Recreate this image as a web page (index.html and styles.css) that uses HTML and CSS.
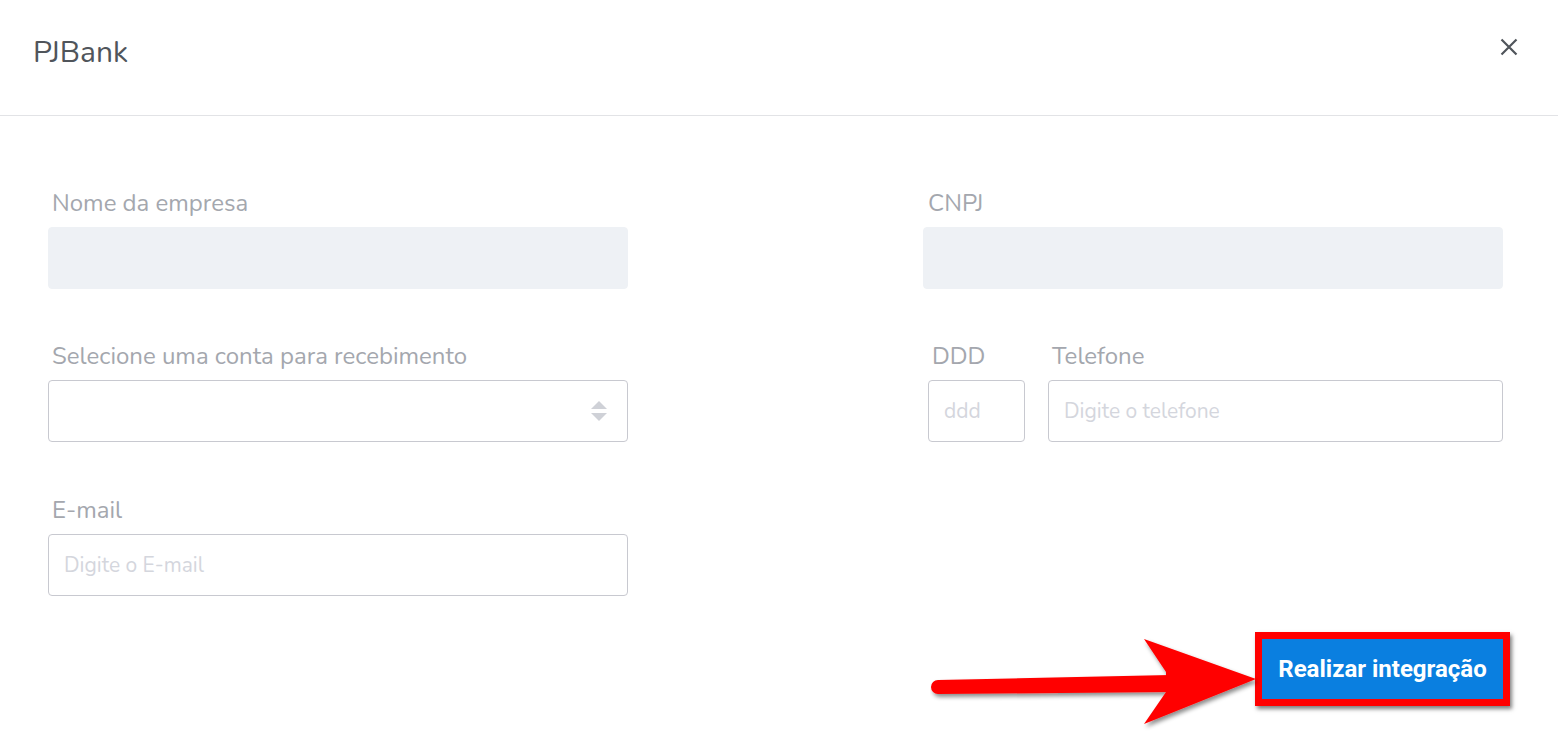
FILE: index.html
```html
<!DOCTYPE html>
<html lang="pt-BR">
<head>
<meta charset="utf-8">
<title>PJBank</title>
<link rel="stylesheet" href="styles.css">
</head>
<body>
<div class="modal">
  <header class="modal-header">
    <h1 class="modal-title">PJBank</h1>
    <button class="close" aria-label="Fechar">
      <svg width="18" height="18" viewBox="0 0 18 18"><path d="M1.5 1.5 L16.5 16.5 M16.5 1.5 L1.5 16.5" stroke="#50555b" stroke-width="2.2" fill="none"/></svg>
    </button>
  </header>
  <main class="modal-body">
    <div class="grid">
      <div class="field">
        <label class="label">Nome da empresa</label>
        <div class="input disabled"></div>
      </div>
      <div class="field">
        <label class="label shift">CNPJ</label>
        <div class="input disabled"></div>
      </div>
      <div class="field">
        <label class="label">Selecione uma conta para recebimento</label>
        <div class="input select">
          <svg class="sel-icon" width="18" height="24" viewBox="0 0 18 24"><path d="M9 2 L17 10 H1 Z" fill="#cfd1d7"/><path d="M9 22 L17 14 H1 Z" fill="#cfd1d7"/></svg>
        </div>
      </div>
      <div class="field phone">
        <div class="ddd">
          <label class="label">DDD</label>
          <div class="input"><span class="ph">ddd</span></div>
        </div>
        <div class="tel">
          <label class="label">Telefone</label>
          <div class="input"><span class="ph">Digite o telefone</span></div>
        </div>
      </div>
      <div class="field field-email">
        <label class="label">E-mail</label>
        <div class="input"><span class="ph">Digite o E-mail</span></div>
      </div>
    </div>
    <div class="footer">
      <button class="btn">Realizar integração</button>
    </div>
  </main>
  <svg class="arrow" width="340" height="100" viewBox="0 0 340 100">
    <defs>
      <filter id="sh" x="-10%" y="-20%" width="120%" height="150%">
        <feDropShadow dx="2" dy="3" stdDeviation="2" flood-color="#000" flood-opacity="0.45"/>
      </filter>
    </defs>
    <g filter="url(#sh)" fill="#ff0000">
      <path d="M8 48 L240 43 L240 60 L8 62 A7 7 0 0 1 8 48 Z"/>
      <path d="M214 7 L326 47 L214 92 L236 60 L236 40 Z"/>
    </g>
  </svg>
</div>
</body>
</html>
```
FILE: styles.css
```css
* { box-sizing: border-box; }
html, body { margin: 0; padding: 0; background: #fff; }
body {
  font-family: "Nunito", "Open Sans", "Noto Sans", sans-serif;
  width: 1558px;
  height: 733px;
  overflow: hidden;
}
.modal { position: relative; height: 733px; }
.modal-header {
  height: 116px;
  border-bottom: 1px solid #e2e3e6;
  display: flex;
  align-items: flex-start;
  justify-content: space-between;
  padding: 33px 40px 0 33px;
}
.modal-title {
  margin: 0;
  font-size: 30px;
  font-weight: 400;
  color: #50555b;
  line-height: 40px;
}
.close {
  border: 0;
  background: none;
  padding: 0;
  margin-top: 5px;
  cursor: pointer;
  display: flex;
}
.modal-body { padding: 75px 55px 0 48px; }
.grid {
  display: grid;
  grid-template-columns: 580px 580px;
  justify-content: space-between;
  row-gap: 55px;
}
.field { display: flex; flex-direction: column; }
.field-email { margin-top: 1px; }
.label {
  font-size: 24px;
  line-height: 24px;
  color: #a4a7ae;
  padding-left: 4px;
  margin-bottom: 12px;
}
.label.shift { padding-left: 5px; }
.input {
  height: 62px;
  border: 1px solid #c8c9d0;
  border-radius: 4px;
  display: flex;
  align-items: center;
  padding: 0 15px;
}
.input.disabled { background: #eef1f5; border-color: #eef1f5; }
.input.select { justify-content: flex-end; padding-right: 19px; }
.ph { font-size: 21px; color: #d4d6dd; }
.phone { flex-direction: row; gap: 23px; padding-left: 5px; }
.ddd { width: 97px; display: flex; flex-direction: column; }
.tel { flex: 1; display: flex; flex-direction: column; }
.footer {
  display: flex;
  justify-content: flex-end;
  margin-top: 36px;
  margin-right: -7px;
}
.btn {
  width: 255px;
  height: 74px;
  border: 7px solid #ff0000;
  background: #0a7fe0;
  color: #fff;
  font-family: "Roboto", "Noto Sans", sans-serif;
  font-weight: 700;
  font-size: 24px;
  box-shadow: 2px 3px 4px rgba(0,0,0,0.5);
  padding: 0;
}
.arrow { position: absolute; left: 930px; top: 632px; }
```
